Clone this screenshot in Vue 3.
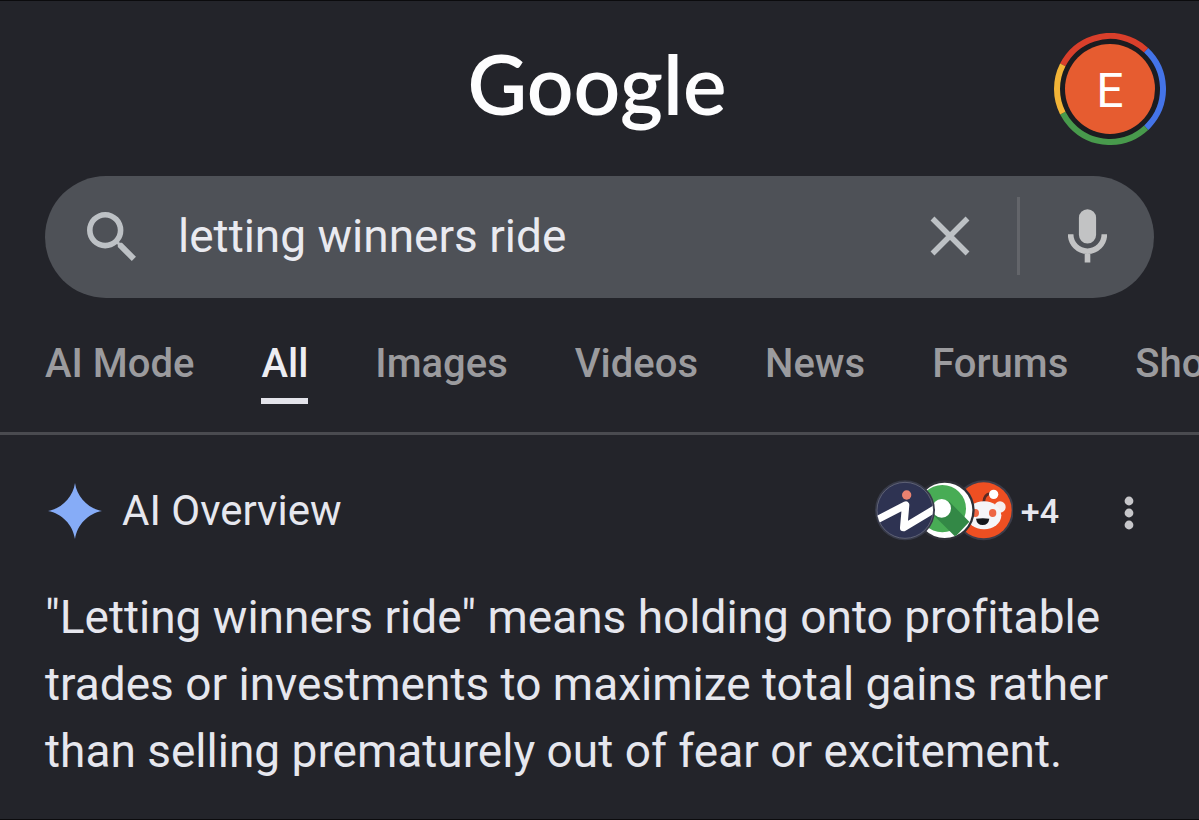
<script setup>
import { ref } from 'vue'

const query = ref('letting winners ride')
const tabs = ['AI Mode', 'All', 'Images', 'Videos', 'News', 'Forums', 'Shopping']
const active = ref('All')
const summary = [
  '"Letting winners ride" means holding onto profitable',
  'trades or investments to maximize total gains rather',
  'than selling prematurely out of fear or excitement.',
]
</script>

<template>
  <div class="page">
    <header class="top">
      <a class="logo" href="#">Google</a>
      <button class="avatar" type="button" aria-label="Account">
        <svg viewBox="0 0 112 112" aria-hidden="true">
          <circle cx="56" cy="56" r="50" fill="#1b1c20" />
          <g fill="none" stroke-width="6">
            <circle cx="56" cy="56" r="53" stroke="#d93f2b" pathLength="360" stroke-dasharray="106 254" transform="rotate(207 56 56)" />
            <circle cx="56" cy="56" r="53" stroke="#4474e8" pathLength="360" stroke-dasharray="94 266" transform="rotate(-47 56 56)" />
            <circle cx="56" cy="56" r="53" stroke="#489a4c" pathLength="360" stroke-dasharray="106 254" transform="rotate(47 56 56)" />
            <circle cx="56" cy="56" r="53" stroke="#f2b437" pathLength="360" stroke-dasharray="54 306" transform="rotate(153 56 56)" />
          </g>
          <circle cx="56" cy="56" r="45" fill="#e65c30" />
        </svg>
        <span class="initial">E</span>
      </button>
    </header>

    <form class="search" role="search" @submit.prevent>
      <button class="icon" type="submit" aria-label="Search">
        <svg width="49" height="49" viewBox="3 3 17.5 17.5" aria-hidden="true">
          <path fill="#bdc1c5" d="M15.5 14h-.79l-.28-.27A6.471 6.471 0 0 0 16 9.5 6.5 6.5 0 1 0 9.5 16c1.61 0 3.09-.59 4.23-1.57l.27.28v.79l5 4.99L20.49 19l-4.99-5zm-6 0C7.01 14 5 11.99 5 9.5S7.01 5 9.5 5 14 7.01 14 9.5 11.99 14 9.5 14z" />
        </svg>
      </button>
      <input v-model="query" class="query" type="text" aria-label="Search query" />
      <button class="icon" type="button" aria-label="Clear" @click="query = ''">
        <svg width="40" height="40" viewBox="0 0 40 40" aria-hidden="true">
          <path d="M2.500 2.500l35 35M37.500 2.500l-35 35" stroke="#bdc1c5" stroke-width="5.500" />
        </svg>
      </button>
      <span class="rule"></span>
      <button class="icon" type="button" aria-label="Search by voice">
        <svg width="39" height="54" viewBox="0 0 118 162" aria-hidden="true">
          <rect x="33" y="0" width="52" height="104" rx="26" fill="#c2c3c4" />
          <path d="M8 76a51 51 0 0 0 102 0M59 127v34" fill="none" stroke="#c2c3c4" stroke-width="17" />
        </svg>
      </button>
    </form>

    <nav class="tabs" aria-label="Result types">
      <a
        v-for="tab in tabs"
        :key="tab"
        href="#"
        class="tab"
        :class="{ active: tab === active }"
        @click.prevent="active = tab"
      >{{ tab }}</a>
    </nav>

    <main class="overview">
      <div class="head">
        <svg class="spark" width="54" height="56" viewBox="0 0 54 56" aria-hidden="true">
          <path fill="#86acf7" d="M27 0C29 14 40 25.500 54 28C40 30.500 29 42 27 56C25 42 14 30.500 0 28C14 25.500 25 14 27 0z" />
        </svg>
        <h1>AI Overview</h1>
        <button class="sources" type="button">
          <svg width="138" height="61" viewBox="45 30 414 183" aria-hidden="true">
            <defs>
              <clipPath id="disc-a"><circle cx="135" cy="121" r="84" /></clipPath>
              <clipPath id="disc-b"><circle cx="254" cy="121" r="83" /></clipPath>
              <clipPath id="disc-c"><circle cx="371" cy="121" r="84" /></clipPath>
            </defs>
            <circle cx="371" cy="121" r="90" fill="#3d3d4a" />
            <g clip-path="url(#disc-c)">
              <rect x="280" y="30" width="180" height="182" fill="#ee4f22" />
              <path d="M371 97c1-14 6-25 20-26" fill="none" stroke="#5a2a24" stroke-width="8" />
              <circle cx="401" cy="73" r="14" fill="#fff" />
              <circle cx="420" cy="111" r="17" fill="#f6eeee" />
              <circle cx="328" cy="111" r="17" fill="#f6eeee" />
              <ellipse cx="372" cy="136" rx="52" ry="42" fill="#f5f5f8" />
              <ellipse cx="346" cy="129" rx="11" ry="12" fill="#ee6644" />
              <ellipse cx="398" cy="129" rx="11" ry="12" fill="#ee6644" />
              <path d="M348 146q21-3 40 0q-3 19-20 19t-20-19z" fill="#15171c" />
            </g>
            <circle cx="254" cy="121" r="90" fill="#2f3037" />
            <g clip-path="url(#disc-b)">
              <rect x="165" y="30" width="180" height="182" fill="#fff" />
              <circle cx="247" cy="116" r="71" fill="#48ac55" />
              <path d="M266 93l62 62-42 45-62-61z" fill="#338846" />
              <circle cx="245" cy="115" r="28" fill="#fff" />
            </g>
            <circle cx="135" cy="121" r="90" fill="#373a49" />
            <circle cx="135" cy="121" r="84" fill="#2e3352" stroke="#74778a" stroke-width="2" />
            <g clip-path="url(#disc-a)">
              <path d="M48 151l89-46-6 68 95-57" fill="none" stroke="#fff" stroke-width="22" stroke-linejoin="round" />
              <circle cx="140" cy="75" r="14" fill="#ea8270" />
            </g>
          </svg>
          <span>+4</span>
        </button>
        <button class="icon more" type="button" aria-label="More options">
          <svg width="10" height="34" viewBox="0 0 10 34" aria-hidden="true">
            <g fill="#c6c6c9">
              <circle cx="5" cy="5" r="4.400" />
              <circle cx="5" cy="17" r="4.400" />
              <circle cx="5" cy="29" r="4.400" />
            </g>
          </svg>
        </button>
      </div>
      <p class="summary">
        <template v-for="line in summary" :key="line">{{ line }}<br /></template>
      </p>
    </main>
  </div>
</template>

<style>
body {
  margin: 0;
  background: #23242a;
}
</style>

<style scoped>
.page {
  box-sizing: border-box;
  min-height: 100vh;
  overflow: hidden;
  border-top: 1px solid #0b0b0d;
  border-bottom: 1px solid #0b0b0d;
  background: #23242a;
  color: #e6e7ee;
  font-family: Roboto, "Liberation Sans", sans-serif;
  font-variant-ligatures: none;
}

button {
  padding: 0;
  border: 0;
  background: none;
  color: inherit;
  font: inherit;
}

svg {
  display: block;
}

a {
  color: inherit;
  text-decoration: none;
}

.top {
  display: grid;
  grid-template-columns: 1fr auto 1fr;
  align-items: start;
  padding: 32px 33px 0 28px;
}

.logo {
  grid-column: 2;
  color: #fdfdfe;
  font: 600 82px/100px Lato, sans-serif;
}

.avatar {
  display: grid;
  justify-self: end;
  place-items: center;
  width: 112px;
  height: 112px;
}

.avatar > * {
  grid-area: 1 / 1;
}

.avatar svg {
  width: 112px;
}

.initial {
  padding-top: 4px;
  color: #fff;
  font-size: 48px;
  line-height: 56px;
}

.search {
  display: flex;
  align-items: center;
  box-sizing: border-box;
  height: 122px;
  margin: 31px 45px 0;
  padding: 0 47px 2px 42px;
  border-radius: 61px;
  background: #4e5157;
}

.icon {
  flex: none;
}

.query {
  flex: 1;
  min-width: 0;
  margin: 0 24px 0 42px;
  padding: 0;
  border: 0;
  outline: 0;
  background: none;
  color: #e9eaf0;
  font: 400 46px/60px Roboto, "Liberation Sans", sans-serif;
}

.rule {
  width: 3px;
  height: 78px;
  margin: 0 48px 0 47px;
  background: #63656a;
}

.tabs {
  display: flex;
  gap: 67px;
  padding: 42px 0 28px 45px;
  border-bottom: 3px solid #4a4b50;
  color: #9b9b9e;
  font-size: 40px;
  font-weight: 500;
  line-height: 48px;
  white-space: nowrap;
}

.tab {
  padding-bottom: 10px;
  border-bottom: 6px solid transparent;
}

.tab.active {
  border-color: #e3e3ea;
  color: #ededf2;
}

.overview {
  padding: 45px 45px 0;
}

.head {
  display: flex;
  align-items: center;
}

.spark {
  margin: 0 20px 0 3px;
}

h1 {
  flex: 1;
  margin: 0;
  font-size: 42px;
  font-weight: 400;
  line-height: 48px;
}

.sources {
  display: flex;
  align-items: center;
  gap: 8px;
  font-size: 34px;
  font-weight: 500;
}

.more {
  margin: 4px 20px 0 65px;
}

.summary {
  margin: 43px 0 0;
  font-size: 46px;
  line-height: 67px;
  white-space: nowrap;
}
</style>
